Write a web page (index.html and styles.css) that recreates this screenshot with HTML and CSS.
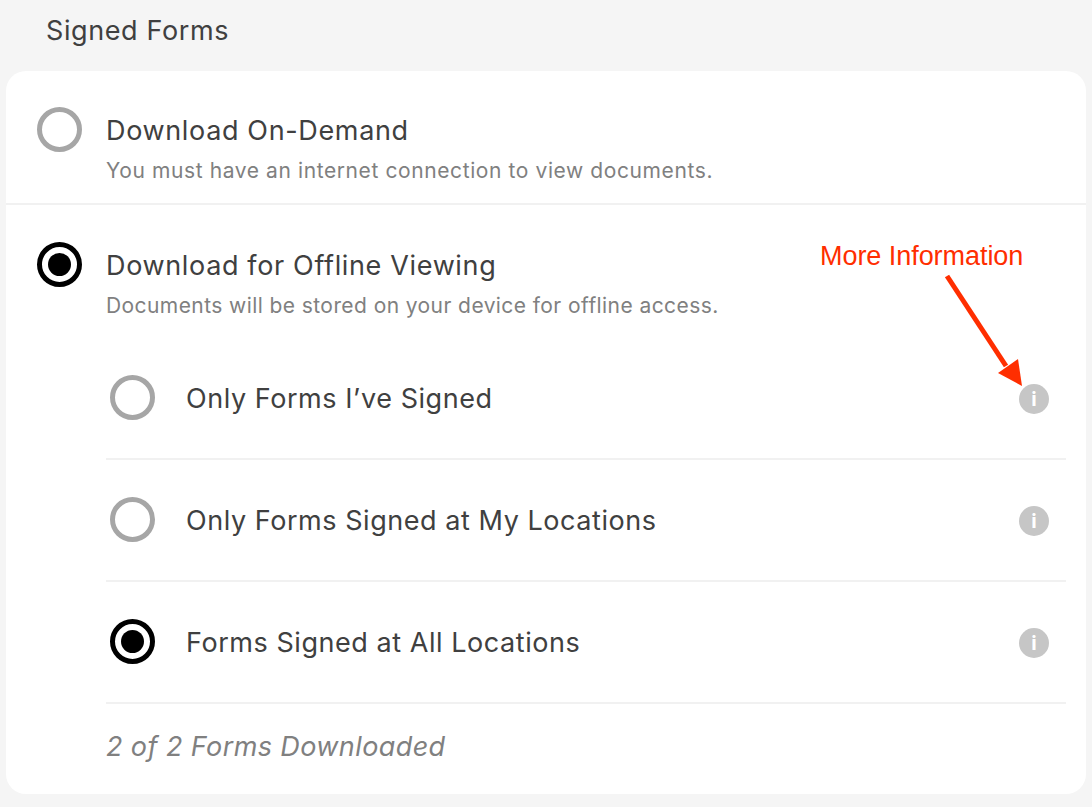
FILE: index.html
```html
<!DOCTYPE html>
<html lang="en">
<head>
    <meta charset="UTF-8">
    <title>Signed Forms</title>
    <link rel="stylesheet" href="styles.css">
</head>
<body>
    <h2 class="page-title">Signed Forms</h2>
    <div class="card">
        <div class="option option-first">
            <span class="radio"></span>
            <div class="option-text">
                <div class="option-title">Download On-Demand</div>
                <div class="option-desc">You must have an internet connection to view documents.</div>
            </div>
        </div>
        <div class="option option-second">
            <span class="radio radio-on"></span>
            <div class="option-text">
                <div class="option-title">Download for Offline Viewing</div>
                <div class="option-desc">Documents will be stored on your device for offline access.</div>
            </div>
        </div>
        <div class="sub-list">
            <div class="sub-row">
                <span class="radio"></span>
                <span class="sub-label">Only Forms I’ve Signed</span>
                <span class="info">i</span>
            </div>
            <div class="sub-row">
                <span class="radio"></span>
                <span class="sub-label">Only Forms Signed at My Locations</span>
                <span class="info">i</span>
            </div>
            <div class="sub-row">
                <span class="radio radio-on"></span>
                <span class="sub-label">Forms Signed at All Locations</span>
                <span class="info">i</span>
            </div>
            <div class="status">2 of 2 Forms Downloaded</div>
        </div>
    </div>

    <div class="note">More Information</div>
    <svg class="arrow" width="100" height="125" viewBox="0 0 100 125">
        <line x1="7" y1="4" x2="66" y2="94" stroke="#ff2e00" stroke-width="5"/>
        <polygon points="82,114 58,101 78,87" fill="#ff2e00"/>
    </svg>
</body>
</html>
```

FILE: styles.css
```css
html, body {
    margin: 0;
    padding: 0;
}
body {
    width: 1092px;
    height: 807px;
    overflow: hidden;
    position: relative;
    background: #f5f5f5;
    font-family: "Inter", sans-serif;
    color: #404040;
}
.page-title {
    margin: 0;
    padding: 12px 0 0 46px;
    height: 58px;
    box-sizing: border-box;
    font-size: 27px;
    line-height: 38px;
    font-weight: 400;
    letter-spacing: 0.6px;
}
.card {
    margin: 13px 6px 0 6px;
    height: 723px;
    background: #fff;
    border-radius: 20px;
}
.option {
    display: flex;
    align-items: flex-start;
    gap: 24px;
    padding: 36px 0 0 31px;
}
.option-first {
    height: 134px;
    box-sizing: border-box;
    border-bottom: 2px solid #f1f1f1;
}
.option-second {
    padding-top: 37px;
}
.option-text {
    padding-top: 5px;
}
.option-title {
    font-size: 27px;
    line-height: 38px;
    letter-spacing: 0.65px;
}
.option-desc {
    margin-top: 6px;
    font-size: 21px;
    line-height: 30px;
    letter-spacing: 0.6px;
    color: #808080;
}
.option-second .option-desc {
    letter-spacing: 0.42px;
}
.radio {
    flex: none;
    width: 45px;
    height: 45px;
    box-sizing: border-box;
    border: 5px solid #a6a6a6;
    border-radius: 50%;
    display: flex;
    align-items: center;
    justify-content: center;
}
.radio-on {
    border-color: #000;
}
.radio-on::after {
    content: "";
    width: 23px;
    height: 23px;
    border-radius: 50%;
    background: #000;
}
.sub-list {
    margin: 17px 20px 0 100px;
}
.sub-row {
    display: flex;
    align-items: center;
    height: 122px;
    padding: 0 17px 0 4px;
    box-sizing: border-box;
    border-bottom: 2px solid #f1f1f1;
}
.sub-row .radio {
    margin-top: -2px;
}
.sub-label {
    flex: 1;
    margin-left: 31px;
    font-size: 27px;
    letter-spacing: 0.55px;
}
.info {
    width: 30px;
    height: 30px;
    margin-top: 2px;
    border-radius: 50%;
    background: #c6c6c6;
    color: #fff;
    font-weight: 700;
    font-size: 20px;
    line-height: 30px;
    text-align: center;
}
.status {
    padding-top: 24px;
    font-size: 27px;
    line-height: 38px;
    font-style: italic;
    letter-spacing: 0.4px;
    color: #808080;
}
.note {
    position: absolute;
    left: 820px;
    top: 240px;
    font-family: "Liberation Sans", sans-serif;
    font-size: 27px;
    line-height: 32px;
    letter-spacing: -0.05px;
    color: #ff2e00;
}
.arrow {
    position: absolute;
    left: 940px;
    top: 272px;
}
```
